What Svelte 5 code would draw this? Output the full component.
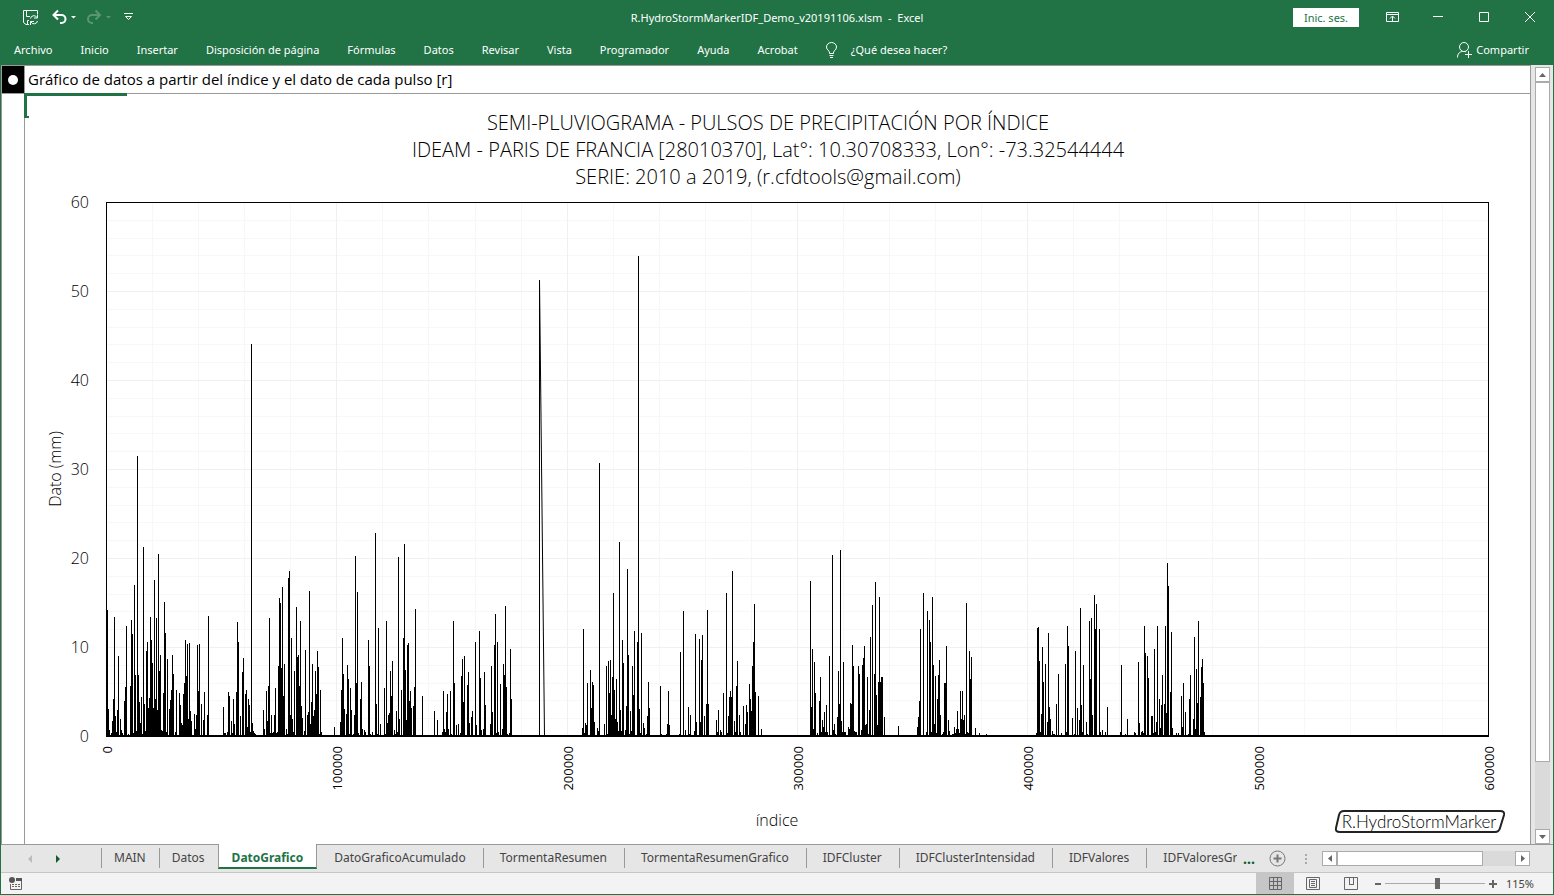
<script lang="ts">
  const menu = [
    'Archivo',
    'Inicio',
    'Insertar',
    'Disposición de página',
    'Fórmulas',
    'Datos',
    'Revisar',
    'Vista',
    'Programador',
    'Ayuda',
    'Acrobat'
  ];

  const sheets = [
    'MAIN',
    'Datos',
    'DatoGrafico',
    'DatoGraficoAcumulado',
    'TormentaResumen',
    'TormentaResumenGrafico',
    'IDFCluster',
    'IDFClusterIntensidad',
    'IDFValores',
    'IDFValoresGrafico'
  ];

  let activeSheet = $state('DatoGrafico');
  let zoom = $state(115);

  const plotWidth = 1382;
  const plotHeight = 534;

  // x:height of every pulse, in plot units
  const pulses = `
    1:127 2:28 3:7 4:2 5:4 6:16 7:38 8:120 9:21 10:5 11:27 12:81 13:2 14:18 15:7 16:4 18:36 19:50 20:111
    22:3 24:51 25:117 26:103 27:4 28:152 29:62 30:6 31:281 32:62 33:35 34:14 35:40 36:3 37:190 38:33 39:6
    40:86 41:95 42:29 43:39 44:120 45:97 46:74 47:29 48:157 49:38 50:119 51:27 52:183 53:66 54:82 55:7
    56:6 57:44 58:135 59:104 60:5 61:78 63:28 64:37 65:47 66:82 67:63 69:5 70:47 73:44 74:32 75:14 76:12
    77:43 78:54 79:97 80:61 81:93 82:18 83:94 84:26 85:16 88:23 89:8 90:22 91:92 92:46 93:93 95:33 97:17
    98:45 101:22 102:121
    117:30 118:4 119:4 121:5 122:45 123:41 125:16 126:4 127:38 128:13 130:45 131:115 132:95 134:21 136:65
    137:79 139:43 140:47 141:10 142:38 143:32 144:5 145:393 146:14 147:6 148:4 149:3 157:27 158:8 160:46
    161:16 162:51 163:119 164:4 165:22 166:4 167:5 168:22 169:49 170:4 171:5 172:71 173:139 174:134 175:69
    176:150 177:41 178:73 180:8 181:3 182:159 183:166 184:22 185:99 186:18 187:5 188:66 190:130 191:80
    192:82 193:51 194:116 195:31 196:19 198:6 199:87 201:22 202:25 203:146 204:13 205:35 206:73 207:21
    208:27 209:66 210:43 211:86 212:70 213:3 214:47 215:5 228:10
    234:15 235:47 236:99 237:63 238:28 240:23 241:72 242:58 243:3 244:49 245:27 247:3 248:22 249:181
    250:54 251:145 252:4 254:38 255:55 256:8 258:7 259:5 262:97 263:71 264:3 266:5 269:204 270:33 271:3
    272:109 274:13 278:49 279:3 280:116 281:14 282:22 283:24 284:66 285:41 286:76 288:7 289:3 290:26 291:5
    292:180 293:18 295:47 297:99 298:193 299:67 300:17 301:92 302:94 303:36 304:46 305:29 307:31 308:50
    309:128 316:41 328:26 331:17 336:5 337:46 338:8 339:5 340:25 341:43 342:8 344:46 345:3 347:116 348:54
    350:12 352:13 354:4 355:61 356:78 357:35 358:81 361:52 362:65 363:14 365:20 366:26 369:95 370:12
    373:106 374:59 375:7 377:8 378:65 379:32 384:13 385:71 386:25 388:92 389:123 390:4 391:95 392:5 394:53
    396:8 397:73 398:62 399:131 400:50 401:3 403:4 404:88 405:38 433:457
    476:9 477:108 478:4 479:14 480:12 481:54 484:67 485:29 486:55 487:52 488:15 491:9 492:6 493:274 498:13
    500:71 501:3 502:76 503:44 504:77 505:22 506:60 507:144 508:47 509:18 510:58 511:15 512:6 513:195
    514:27 515:6 516:97 517:74 519:7 520:31 521:168 522:82 523:3 524:26 525:6 526:71 527:42 528:106 531:95
    532:481 533:28 534:4 535:104 537:14 538:9 540:3 541:21 542:55 543:29 554:51 555:3 560:3 561:13 562:46
    563:12 573:3 574:85 577:126 579:7 582:30 583:3 584:22 588:6 589:103 590:15 593:98 594:15 595:77
    596:102 598:21 600:33 601:127 602:33 610:17 611:5 612:27 614:7 615:5 617:44 620:144 621:4 622:21
    623:40 624:46 625:40 626:166 628:16 629:5 630:51 631:76 633:22 634:5 637:31 639:13 640:32 641:25
    643:53 644:38 645:26 646:71 647:95 648:133 649:45 652:41 655:8
    704:156 705:30 706:88 707:8 708:75 709:44 711:4 713:36 714:60 715:5 716:17 717:10 718:25 719:5 720:32
    721:5 723:81 726:182 727:7 728:13 729:3 731:20 732:66 733:33 734:187 735:16 736:5 737:75 738:5 739:5
    742:10 743:8 744:34 745:33 746:92 747:71 748:6 749:5 750:5 752:71 753:63 755:7 756:72 757:79 758:91
    759:12 760:13 761:60 762:3 763:27 764:100 766:132 768:63 769:155 770:42 771:12 772:55 773:140 774:55
    775:60 776:60 778:20 792:11
    811:10 812:20 813:36 814:108 817:144 820:5 821:126 823:117 824:95 825:5 826:140 827:72 828:13 829:61
    830:4 831:38 832:62 833:77 834:22 836:3 837:5 838:54 839:54 840:91 842:17 843:6 846:3 847:3 848:10
    849:4 850:8 851:26 852:8 853:4 854:46 855:18 856:46 857:17 858:22 859:3 860:134 861:5 862:4 863:86
    864:58 865:80 869:9 873:4 880:3
    930:4 931:109 932:110 933:76 934:5 935:23 936:90 937:55 939:73 941:15 942:104 943:30 944:18 946:6
    947:3 948:3 950:33 952:63 955:4 959:73 960:5 961:111 962:91 966:19 968:3 969:86 971:29 973:17 974:129
    975:32 976:5 977:72 980:15 981:3 983:116 984:58 985:119 986:22 988:142 989:108 990:133 993:108 994:5
    996:7 999:5 1001:30 1014:5 1015:72 1019:3 1021:18 1028:5 1029:4 1032:75 1033:14 1035:5 1036:6 1037:4
    1038:111 1039:84 1041:81 1042:59 1045:21 1046:21 1047:4 1048:88 1049:5 1050:15 1051:111 1053:38 1054:9
    1055:32 1056:62 1058:33 1059:111 1060:24 1061:174 1062:151 1064:45 1065:105 1066:9 1070:4 1072:4
    1075:41 1076:10 1077:54 1079:25 1082:3 1083:38 1084:62 1087:18 1088:100 1089:8 1090:68 1091:34
    1092:116 1094:40 1095:70 1096:78 1097:54 1098:5`
    .trim()
    .split(/\s+/)
    .map((pair) => pair.split(':').map(Number));

  const pulsePath = pulses.map(([x, h]) => `M${x + 0.5} 535V${535 - h}`).join('');

  const yTicks = [0, 10, 20, 30, 40, 50, 60];
  const xTicks = [0, 100000, 200000, 300000, 400000, 500000, 600000];

  const xPos = (value: number) => Math.round((value / 600000) * plotWidth) + 0.5;
  const yPos = (value: number) => Math.round(plotHeight - (value / 60) * plotHeight) + 0.5;

  const minorY = Array.from({ length: 29 }, (_, i) => (i + 1) * 2);
  const minorX = Array.from({ length: 29 }, (_, i) => (i + 1) * 20000);
</script>

<div class="window">
  <header>
    <div class="title-bar">
      <div class="quick-access">
        <button class="save" aria-label="Guardar">
          <svg width="16" height="16" viewBox="0 0 16 16">
            <path d="M6 15.500H3L.5 13.500V1.500H14.500V5M3.500 2V7.500H7M4.500 15V11.500H6" />
            <path d="M7.500 9.500A3.500 3.500 0 0 1 14 8.500M14.500 5.500V9H11M14.500 12A3.500 3.500 0 0 1 8 13M7.500 16V12.500H11" />
          </svg>
        </button>
        <button class="undo" aria-label="Deshacer">
          <svg width="25" height="16" viewBox="0 0 25 16">
            <path class="thick" d="M1.500 6H9.500A4 4 0 0 1 9.500 14H8M6 1.500L1.500 6L6 10.500" />
            <path class="solid" d="M19 7H24L21.500 9.500Z" />
          </svg>
        </button>
        <button class="redo" aria-label="Rehacer">
          <svg width="25" height="16" viewBox="0 0 25 16">
            <path class="thick" d="M13 6H5A4 4 0 0 0 5 14H6M8.500 1.500L13 6L8.500 10.500" />
            <path class="solid" d="M19 7H24L21.500 9.500Z" />
          </svg>
        </button>
        <button class="customize" aria-label="Personalizar barra">
          <svg width="9" height="8" viewBox="0 0 9 8">
            <path d="M0 .5H9M1.500 3.500H7.500L4.500 6.500Z" />
          </svg>
        </button>
      </div>
      <h1>R.HydroStormMarkerIDF_Demo_v20191106.xlsm&nbsp; -&nbsp; Excel</h1>
      <div class="window-controls">
        <button class="sign-in">Inic. ses.</button>
        <button aria-label="Opciones de la cinta">
          <svg width="13" height="10" viewBox="0 0 13 10">
            <path d="M.5 .5H12.500V9.500H.5ZM0 2.500H13M6.500 9V4.500M4 6.500L6.500 4L9 6.500" />
          </svg>
        </button>
        <button aria-label="Minimizar">
          <svg width="10" height="10" viewBox="0 0 10 10"><path d="M0 4.500H10" /></svg>
        </button>
        <button aria-label="Maximizar">
          <svg width="10" height="10" viewBox="0 0 10 10"><path d="M.5 .5H9.500V9.500H.5Z" /></svg>
        </button>
        <button aria-label="Cerrar">
          <svg width="10" height="10" viewBox="0 0 10 10"><path d="M0 0L10 10M10 0L0 10" /></svg>
        </button>
      </div>
    </div>

    <nav class="menu">
      {#each menu as item}
        <button>{item}</button>
      {/each}
      <button class="tell-me">
        <svg width="11" height="16" viewBox="0 0 11 16">
          <path d="M3.500 11.500V10C3.500 9 .5 8 .5 5A5 4.500 0 0 1 10.500 5C10.500 8 7.500 9 7.500 10V11.500ZM3.500 13.500H7.500M4 15.500H7" />
        </svg>
        ¿Qué desea hacer?
      </button>
      <button class="share">
        <svg width="15" height="16" viewBox="0 0 15 16">
          <circle cx="7" cy="5" r="4.500" />
          <path d="M.5 15.500C.5 11.500 3 9.500 5.500 9.500M8 9.500L9 10M11.500 9V16M8 12.500H15" />
        </svg>
        Compartir
      </button>
    </nav>
  </header>

  <main>
    <div class="sheet">
      <div class="row">
        <div class="marker"><span></span></div>
        <div class="note">Gráfico de datos a partir del índice y el dato de cada pulso [r]</div>
      </div>
      <div class="row chart-row">
        <div class="side"></div>
        <div class="chart">
          <div class="selection"></div>
          <svg class="plot" viewBox="0 0 1505 750" role="img" aria-label="Pulsos de precipitación por índice">
            <g class="chart-title">
              <text x="743" y="36">SEMI-PLUVIOGRAMA - PULSOS DE PRECIPITACIÓN POR ÍNDICE</text>
              <text x="743" y="63">IDEAM - PARIS DE FRANCIA [28010370], Lat°: 10.30708333, Lon°: -73.32544444</text>
              <text x="743" y="90">SERIE: 2010 a 2019, (r.cfdtools@gmail.com)</text>
            </g>

            <g transform="translate(81 108)">
              <g class="minor">
                {#each minorX as value}
                  <line x1={xPos(value)} x2={xPos(value)} y1="0" y2={plotHeight} />
                {/each}
                {#each minorY as value}
                  <line x1="0" x2={plotWidth} y1={yPos(value)} y2={yPos(value)} />
                {/each}
              </g>
              <g class="major">
                {#each xTicks as value}
                  <line x1={xPos(value)} x2={xPos(value)} y1="0" y2={plotHeight} />
                {/each}
                {#each yTicks as value}
                  <line x1="0" x2={plotWidth} y1={yPos(value)} y2={yPos(value)} />
                {/each}
              </g>
              <path class="pulses" d={pulsePath} />
              <path class="falling" d="M433.500 78L438.500 534" />
              <rect class="frame" x="0.5" y="0.5" width={plotWidth} height={plotHeight} />
              <line class="base" x1="0" x2={plotWidth + 1} y1={plotHeight} y2={plotHeight} />

              <g class="y-labels">
                {#each yTicks as value}
                  <text x="-17" y={yPos(value) + 5}>{value}</text>
                {/each}
              </g>
              <g class="x-labels">
                {#each xTicks as value}
                  <text transform="translate({xPos(value) + 5} 544) rotate(-90)">{value}</text>
                {/each}
              </g>
            </g>

            <text class="axis-title" transform="translate(36 375) rotate(-90)">Dato (mm)</text>
            <text class="axis-title" x="752" y="732">índice</text>

            <g class="brand">
              <path d="M1319 717H1475Q1480 717 1479 721L1475 734Q1474 738 1470 738H1315Q1310 738 1311 734L1314 721Q1315 717 1319 717Z" />
              <text x="1394" y="734">R.HydroStormMarker</text>
            </g>
          </svg>
        </div>
      </div>
    </div>
    <div class="scroll-gutter">
      <div class="scrollbar vertical">
        <button aria-label="Subir"><svg width="7" height="4" viewBox="0 0 7 4"><path d="M0 4L3.500 0L7 4Z" /></svg></button>
        <div class="track"><div class="thumb"></div></div>
        <button aria-label="Bajar"><svg width="7" height="4" viewBox="0 0 7 4"><path d="M0 0L3.500 4L7 0Z" /></svg></button>
      </div>
    </div>
  </main>

  <div class="tab-bar">
    <div class="tab-nav">
      <button class="prev" aria-label="Hoja anterior"><svg width="4" height="8" viewBox="0 0 4 8"><path d="M4 0L0 4L4 8Z" /></svg></button>
      <button class="next" aria-label="Hoja siguiente"><svg width="4" height="8" viewBox="0 0 4 8"><path d="M0 0L4 4L0 8Z" /></svg></button>
    </div>
    <div class="tabs">
      {#each sheets as sheet}
        <button
          class="tab"
          class:short={sheet.length < 6}
          class:active={sheet === activeSheet}
          onclick={() => (activeSheet = sheet)}
        >
          {sheet}
        </button>
      {/each}
    </div>
    <div class="tab-tools">
      <button class="more" aria-label="Más hojas">...</button>
      <button class="add" aria-label="Hoja nueva">
        <svg width="17" height="17" viewBox="0 0 17 17">
          <circle cx="8.500" cy="8.500" r="7.500" />
          <path d="M8.500 4.500V12.500M4.500 8.500H12.500" />
        </svg>
      </button>
      <svg class="grip" width="2" height="10" viewBox="0 0 2 10"><path d="M0 0H2V2H0ZM0 4H2V6H0ZM0 8H2V10H0Z" /></svg>
      <div class="scrollbar horizontal">
        <button aria-label="Izquierda"><svg width="4" height="7" viewBox="0 0 4 7"><path d="M4 0L0 3.500L4 7Z" /></svg></button>
        <div class="track"><div class="thumb"></div></div>
        <button aria-label="Derecha"><svg width="4" height="7" viewBox="0 0 4 7"><path d="M0 0L4 3.500L0 7Z" /></svg></button>
      </div>
    </div>
  </div>

  <footer>
    <button class="macro" aria-label="Grabar macro">
      <svg width="13" height="13" viewBox="0 0 13 13">
        <path class="solid" d="M7 1H13V4H7Z" />
        <circle class="solid" cx="3" cy="3" r="3" />
        <path d="M1.500 7V12.500H12.500V4M3 7.500H5M6 7.500H8M9 7.500H11M3 9.500H5M6 9.500H8M9 9.500H11" />
      </svg>
    </button>
    <div class="views">
      <button class="selected" aria-label="Normal">
        <svg width="13" height="13" viewBox="0 0 13 13"><path d="M.5 .5H12.500V12.500H.5ZM4.500 0V13M8.500 0V13M0 4.500H13M0 8.500H13" /></svg>
      </button>
      <button aria-label="Diseño de página">
        <svg width="14" height="13" viewBox="0 0 14 13"><path d="M.5 .5H13.500V12.500H.5ZM3.500 2.500H10.500V10.500H3.500ZM5 4.500H9M5 6.500H9M5 8.500H9" /></svg>
      </button>
      <button aria-label="Salto de página">
        <svg width="14" height="13" viewBox="0 0 14 13"><path d="M.5 .5H13.500V12.500H.5ZM5.500 0V7M9.500 0V7M5 7.500H10" /></svg>
      </button>
    </div>
    <div class="zoom">
      <button aria-label="Alejar"><svg width="6" height="8" viewBox="0 0 6 8"><path d="M0 4H6" /></svg></button>
      <input type="range" min="25" max="195" aria-label="Zoom" bind:value={zoom} />
      <button aria-label="Acercar"><svg width="8" height="8" viewBox="0 0 8 8"><path d="M0 4H8M4 0V8" /></svg></button>
      <output>{zoom}%</output>
    </div>
  </footer>
</div>

<style>
  :global(body) {
    margin: 0;
  }

  * {
    box-sizing: border-box;
  }

  .window {
    display: flex;
    flex-direction: column;
    height: 100vh;
    border: 1px solid #217346;
    border-top: none;
    background: #e6e6e6;
    font-family: 'Noto Sans', 'Open Sans', sans-serif;
    font-size: 12px;
    overflow: hidden;
  }

  button {
    display: flex;
    align-items: center;
    justify-content: center;
    margin: 0;
    padding: 0;
    border: none;
    background: none;
    color: inherit;
    font: inherit;
    white-space: nowrap;
    cursor: pointer;
  }

  svg {
    display: block;
    flex-shrink: 0;
    overflow: visible;
  }

  header {
    background: #217346;
    color: #fff;
    font-size: 11px;
  }

  header svg {
    fill: none;
    stroke: #fff;
  }

  header .thick {
    stroke-width: 2;
  }

  header .solid {
    fill: #fff;
    stroke: none;
  }

  .title-bar {
    display: grid;
    grid-template-columns: 1fr auto 1fr;
    align-items: center;
    height: 34px;
  }

  .quick-access {
    display: flex;
    align-items: center;
    padding-left: 22px;
  }

  .undo {
    margin-left: 13px;
  }

  .redo {
    margin-left: 10px;
    opacity: 0.25;
  }

  .customize {
    margin-left: 12px;
  }

  h1 {
    margin: 0;
    font-size: 11px;
    font-weight: 400;
  }

  .window-controls {
    display: flex;
    align-items: center;
    justify-content: flex-end;
  }

  .window-controls button {
    width: 46px;
    height: 32px;
  }

  .window-controls .sign-in {
    width: 66px;
    height: 19px;
    margin-right: 10px;
    background: #fff;
    color: #217346;
  }

  .menu {
    display: flex;
    align-items: center;
    gap: 28px;
    height: 31px;
    padding: 0 24px 0 13px;
  }

  .tell-me {
    gap: 14px;
  }

  .share {
    gap: 4px;
    margin-left: auto;
  }

  main {
    display: flex;
    flex: 1;
    min-height: 0;
  }

  .sheet {
    display: flex;
    flex: 1;
    flex-direction: column;
    min-width: 0;
    border: 1px solid #999;
    border-width: 1px 1px 0;
    background: #fff;
  }

  .row {
    display: flex;
    border-bottom: 1px solid #999;
  }

  .marker {
    display: flex;
    align-items: center;
    justify-content: center;
    width: 22px;
    height: 27px;
    background: #000;
  }

  .marker span {
    width: 10px;
    height: 10px;
    border-radius: 50%;
    background: #fff;
  }

  .note {
    flex: 1;
    padding-left: 3px;
    border-left: 1px solid #999;
    color: #000;
    font-family: 'Open Sans', 'Noto Sans', sans-serif;
    font-size: 15px;
    line-height: 27px;
  }

  .chart-row {
    flex: 1;
    min-height: 0;
    border-bottom: none;
  }

  .side {
    width: 22px;
  }

  .chart {
    position: relative;
    flex: 1;
    border-left: 1px solid #999;
  }

  .selection {
    position: absolute;
    top: -1px;
    left: -1px;
    width: 103px;
    height: 25px;
    border-top: 3px solid #217346;
    border-left: 3px solid #217346;
  }

  .selection::after {
    content: '';
    position: absolute;
    bottom: 0;
    left: 0;
    width: 2px;
    height: 2px;
    background: #217346;
  }

  .plot {
    width: 100%;
    height: 100%;
    font-family: 'Open Sans', 'Noto Sans', sans-serif;
    font-weight: 300;
  }

  .chart-title {
    font-size: 20px;
    text-anchor: middle;
  }

  .minor line,
  .major line {
    stroke: #f7f7f7;
    shape-rendering: crispEdges;
  }

  .major line {
    stroke: #f0f0f0;
  }

  .pulses,
  .frame,
  .base {
    fill: none;
    stroke: #000;
    shape-rendering: crispEdges;
  }

  .falling {
    stroke: #000;
  }

  .base {
    stroke-width: 2;
  }

  .y-labels {
    font-size: 16px;
    text-anchor: end;
  }

  .x-labels {
    font-size: 13px;
    font-weight: 400;
    text-anchor: end;
  }

  .axis-title {
    font-size: 16px;
    text-anchor: middle;
  }

  .brand path {
    fill: none;
    stroke: #222;
    stroke-width: 2;
  }

  .brand text {
    fill: #000;
    font-family: Lato, sans-serif;
    font-size: 17px;
    font-weight: 300;
    text-anchor: middle;
  }

  .scroll-gutter {
    display: flex;
    padding: 2px 3px 0 4px;
  }

  .scrollbar {
    display: flex;
  }

  .scrollbar button {
    flex-shrink: 0;
    width: 15px;
    height: 15px;
    border: 1px solid #ababab;
    background: #fff;
  }

  .scrollbar svg {
    fill: #666;
  }

  .track {
    flex: 1;
    background: #dadada;
  }

  .thumb {
    border: 1px solid #ababab;
    background: #fff;
  }

  .vertical {
    flex-direction: column;
  }

  .vertical .thumb {
    height: 91%;
  }

  .tab-bar {
    display: flex;
    height: 28px;
    color: #444;
    font-size: 12px;
  }

  .tab-nav {
    display: flex;
    align-items: center;
    gap: 24px;
    width: 100px;
    padding-left: 27px;
    border-top: 1px solid #999;
  }

  .prev {
    fill: #bbb;
  }

  .next {
    fill: #0e5c2f;
  }

  .tabs {
    display: flex;
    flex: 1;
    min-width: 0;
    overflow: hidden;
  }

  .tab {
    position: relative;
    height: 25px;
    padding: 0 17px;
    border-top: 1px solid #999;
  }

  .tab.short {
    padding: 0 13px;
  }

  .tab::before {
    content: '';
    position: absolute;
    top: 3px;
    bottom: 1px;
    left: 0;
    border-left: 1px solid #999;
  }

  .tab.active {
    padding: 3px 13px 0;
    border: 1px solid #999;
    border-width: 0 1px;
    border-bottom: 2px solid #217346;
    background: #fff;
    color: #217346;
    font-weight: 700;
  }

  .tab.active::before,
  .tab.active + .tab::before {
    display: none;
  }

  .tab-tools {
    display: flex;
    align-items: center;
    padding-right: 23px;
    border-top: 1px solid #999;
  }

  .more {
    width: 24px;
    color: #0e5c2f;
    font-size: 14px;
    font-weight: 700;
  }

  .add {
    margin: 0 19px 0 8px;
  }

  .add svg {
    fill: none;
    stroke: #777;
  }

  .add path {
    stroke-width: 2;
  }

  .grip {
    margin-right: 15px;
    fill: #aaa;
  }

  .horizontal {
    width: 208px;
  }

  .horizontal .thumb {
    width: 82%;
    height: 15px;
  }

  footer {
    display: flex;
    align-items: center;
    height: 22px;
    padding: 0 19px 0 8px;
    border-top: 1px solid #c6c6c6;
    background: #f3f3f3;
    color: #444;
    font-size: 11px;
  }

  footer svg {
    fill: none;
    stroke: #666;
  }

  footer .solid {
    fill: #555;
    stroke: none;
  }

  .views {
    display: flex;
    margin-left: auto;
  }

  .views button {
    width: 38px;
    height: 21px;
  }

  .views .selected {
    background: #c6c6c6;
  }

  .zoom {
    display: flex;
    align-items: center;
    margin-left: 5px;
  }

  .zoom path {
    stroke-width: 2;
  }

  .zoom input {
    width: 100px;
    height: 12px;
    margin: 0 4px;
    appearance: none;
    background: linear-gradient(#aaa, #aaa) center / 100% 1px no-repeat;
  }

  .zoom input::-webkit-slider-thumb {
    width: 5px;
    height: 11px;
    appearance: none;
    background: #666;
  }

  output {
    width: 37px;
    text-align: right;
  }
</style>
